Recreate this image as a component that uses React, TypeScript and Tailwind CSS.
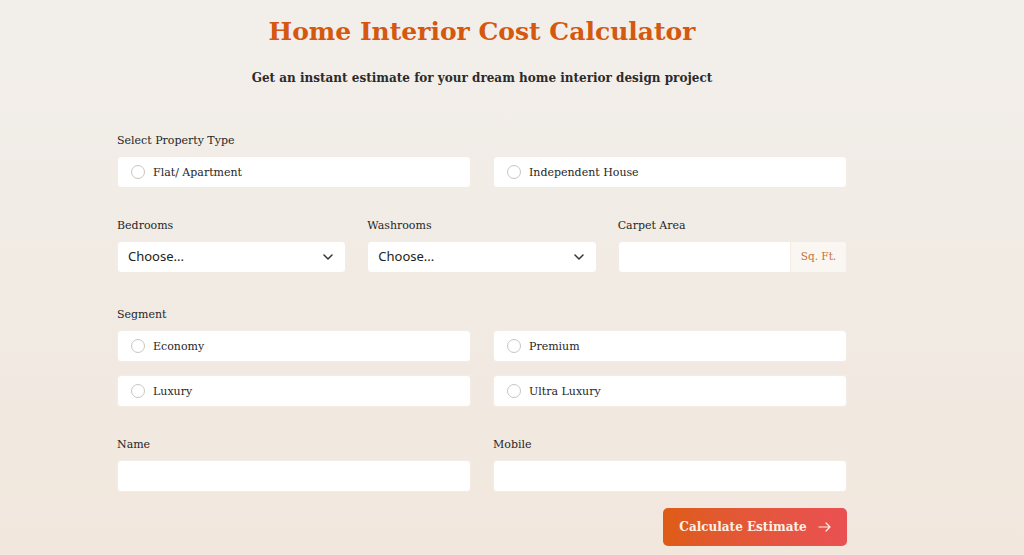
import React from "react";

const serif = { fontFamily: '"DejaVu Serif", "Liberation Serif", serif' };

function Radio({ label }: { label: string }) {
  return (
    <div className="h-[32px] bg-white rounded-[4px] border border-[#f3ece4] flex items-center pl-[13px] gap-[8px]">
      <span className="w-[14px] h-[14px] rounded-full border border-[#c9c6c2] bg-white" />
      <span className="text-[11px] leading-[14px] pt-[2px] text-[#262626]">{label}</span>
    </div>
  );
}

function Label({ children }: { children: React.ReactNode }) {
  return <div className="text-[11px] leading-[16px] pt-[1px] h-[16px] text-[#262626] mb-[8px]">{children}</div>;
}

function Select() {
  return (
    <div className="h-[32px] bg-white rounded-[4px] border border-[#f3ece4] flex items-center justify-between pl-[10px] pr-[12px]">
      <span className="text-[13px] text-[#222]" style={{ fontFamily: '"Noto Sans", "Open Sans", sans-serif' }}>
        Choose...
      </span>
      <svg width="10" height="6" viewBox="0 0 10 6" fill="none">
        <path d="M1 1l4 4 4-4" stroke="#333" strokeWidth="1.5" strokeLinecap="round" strokeLinejoin="round" />
      </svg>
    </div>
  );
}

export default function App() {
  return (
    <div
      className="w-[1024px] h-[555px] overflow-hidden bg-gradient-to-b from-[#f2efeb] to-[#f1e7dd]"
      style={serif}
    >
      <div className="w-[730px] ml-[117px] pt-[14px]">
        <h1 className="text-center text-[25px] leading-[36px] font-bold text-[#d4580f]">
          Home Interior Cost Calculator
        </h1>
        <p className="text-center text-[12px] leading-[20px] font-bold text-[#2b2b2b] mt-[18px]">
          Get an instant estimate for your dream home interior design project
        </p>

        <div className="mt-[44px]">
          <Label>Select Property Type</Label>
          <div className="grid grid-cols-2 gap-[22px]">
            <Radio label="Flat/ Apartment" />
            <Radio label="Independent House" />
          </div>
        </div>

        <div className="mt-[29px] grid grid-cols-3 gap-[21px]">
          <div>
            <Label>Bedrooms</Label>
            <Select />
          </div>
          <div>
            <Label>Washrooms</Label>
            <Select />
          </div>
          <div>
            <Label>Carpet Area</Label>
            <div className="h-[32px] bg-white rounded-[4px] border border-[#f3ece4] flex overflow-hidden">
              <div className="flex-1" />
              <div className="w-[56px] bg-[#faf6f1] border-l border-[#f3ece4] flex items-center justify-center text-[10.5px] text-[#c9703a]">
                Sq. Ft.
              </div>
            </div>
          </div>
        </div>

        <div className="mt-[33px]">
          <Label>Segment</Label>
          <div className="grid grid-cols-2 gap-x-[22px] gap-y-[13px]">
            <Radio label="Economy" />
            <Radio label="Premium" />
            <Radio label="Luxury" />
            <Radio label="Ultra Luxury" />
          </div>
        </div>

        <div className="mt-[29px] grid grid-cols-2 gap-[22px]">
          <div>
            <Label>Name</Label>
            <div className="h-[32px] bg-white rounded-[4px] border border-[#f3ece4]" />
          </div>
          <div>
            <Label>Mobile</Label>
            <div className="h-[32px] bg-white rounded-[4px] border border-[#f3ece4]" />
          </div>
        </div>

        <div className="flex justify-end mt-[16px]">
          <button className="w-[184px] h-[38px] rounded-[5px] bg-gradient-to-r from-[#de5c14] to-[#ea5052] text-[#fdf1e6] text-[12px] font-bold flex items-center justify-center gap-[11px]">
            Calculate Estimate
            <svg width="13" height="10" viewBox="0 0 13 10" fill="none">
              <path d="M1 5h11M8 1l4 4-4 4" stroke="#fdf1e6" strokeWidth="1.2" strokeLinecap="round" strokeLinejoin="round" />
            </svg>
          </button>
        </div>
      </div>
    </div>
  );
}
